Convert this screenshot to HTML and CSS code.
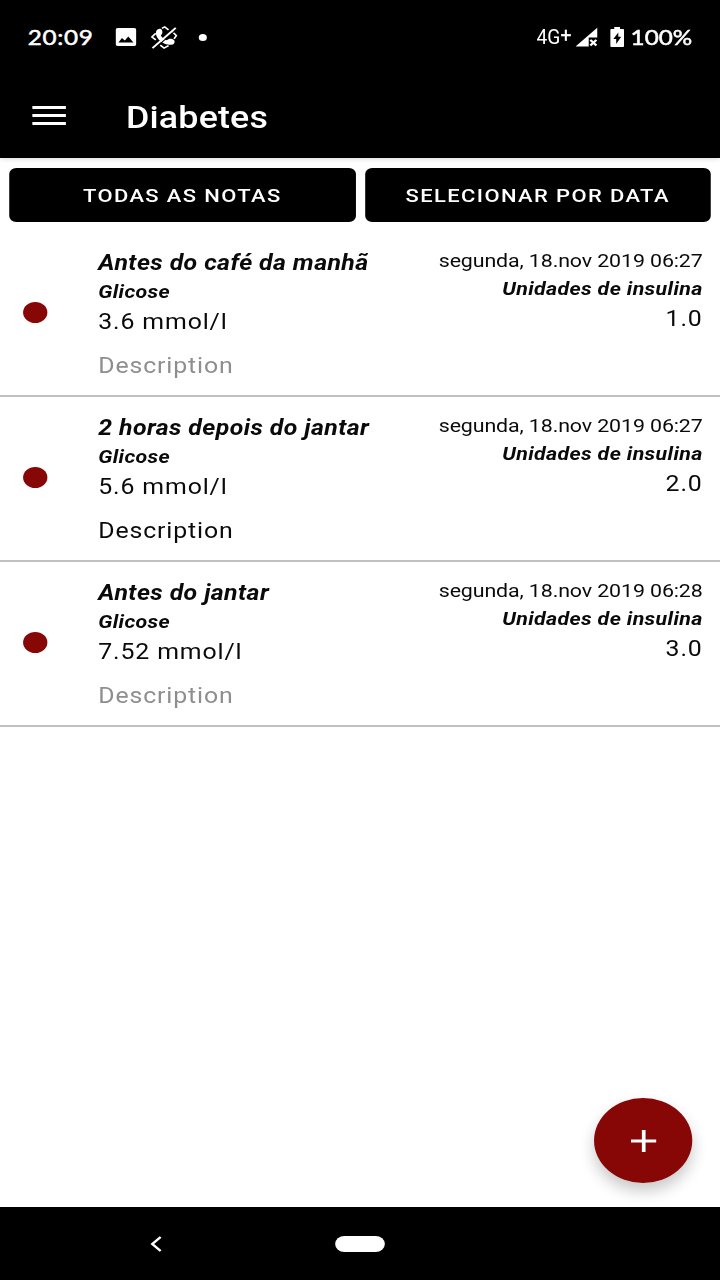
FILE: index.html
```
<!DOCTYPE html>
<html lang="pt">
<head>
    <meta charset="UTF-8">
    <meta name="viewport" content="width=device-width, initial-scale=1.0">
    <title>Diabetes</title>
    <link rel="stylesheet" href="styles.css">
</head>
<body>
    <div class="screen">
        <div class="status-bar">
            <span class="clock">20:09</span>
            <svg class="icon-image" viewBox="0 0 18 18">
                <path fill="#fff" fill-rule="evenodd" d="M2 0h14a2 2 0 0 1 2 2v14a2 2 0 0 1-2 2H2a2 2 0 0 1-2-2V2a2 2 0 0 1 2-2zM5.500 10L2.500 14.500h13l-4.500-6-3 4z"/>
            </svg>
            <svg class="icon-call" viewBox="0 0 24 24">
                <path fill="none" stroke="#fff" stroke-width="1.600" d="M10 2.500l2.500-1.500 3.500 3M19.500 6l3.500 4-2 3.500M4.500 7.500L1 11.500l3.500 3M8.500 20l3.500 3 4-2.500"/>
                <path fill="#fff" d="M5 5C6 3 8 2.300 9.200 3.200c1.300 1.200 1.600 3.500 1 5L9 10c1.200 2.200 3 4 5.300 4.800l2-1.300c1.800-.5 4.200.3 4.900 1.500.7 1.500.2 3.500-1.400 4.300C13.500 21.500 2.500 13.500 5 5z"/>
                <path stroke="#000" stroke-width="1" d="M3.200 23.700l20.500-20.500"/>
                <path stroke="#fff" stroke-width="1.900" d="M1.500 23L22.500 2"/>
            </svg>
            <span class="more-dot"></span>
            <span class="network">4G<span class="plus">+</span></span>
            <svg class="icon-signal" viewBox="0 0 20 20">
                <path fill="#fff" d="M20 0v10.500h-8V20H0z"/>
                <path stroke="#fff" stroke-width="2.200" d="M13.500 13l5.500 6M19 13l-5.500 6"/>
            </svg>
            <svg class="icon-battery" viewBox="0 0 12 20">
                <path fill="#fff" d="M3.500 0h5v2H11a1 1 0 0 1 1 1v16a1 1 0 0 1-1 1H1a1 1 0 0 1-1-1V3a1 1 0 0 1 1-1h2.500z"/>
                <path fill="#000" d="M7 5.500v4.300h2.500L5.200 17v-5H2.700z"/>
            </svg>
            <span class="percent">100%</span>
        </div>

        <header class="app-bar">
            <button class="menu-btn" aria-label="Menu">
                <span></span>
                <span></span>
                <span></span>
            </button>
            <h1>Diabetes</h1>
        </header>

        <main>
            <div class="filters">
                <button class="filter-btn">TODAS AS NOTAS</button>
                <button class="filter-btn">SELECIONAR POR DATA</button>
            </div>

            <ul class="notes">
                <li class="note">
                    <span class="dot"></span>
                    <div class="left">
                        <h2>Antes do café da manhã</h2>
                        <h3>Glicose</h3>
                        <p class="value">3.6 mmol/l</p>
                        <p class="description empty">Description</p>
                    </div>
                    <div class="right">
                        <p class="date">segunda, 18.nov 2019 06:27</p>
                        <h3>Unidades de insulina</h3>
                        <p class="value">1.0</p>
                    </div>
                </li>
                <li class="note">
                    <span class="dot"></span>
                    <div class="left">
                        <h2>2 horas depois do jantar</h2>
                        <h3>Glicose</h3>
                        <p class="value">5.6 mmol/l</p>
                        <p class="description">Description</p>
                    </div>
                    <div class="right">
                        <p class="date">segunda, 18.nov 2019 06:27</p>
                        <h3>Unidades de insulina</h3>
                        <p class="value">2.0</p>
                    </div>
                </li>
                <li class="note">
                    <span class="dot"></span>
                    <div class="left">
                        <h2>Antes do jantar</h2>
                        <h3>Glicose</h3>
                        <p class="value">7.52 mmol/l</p>
                        <p class="description empty">Description</p>
                    </div>
                    <div class="right">
                        <p class="date">segunda, 18.nov 2019 06:28</p>
                        <h3>Unidades de insulina</h3>
                        <p class="value">3.0</p>
                    </div>
                </li>
            </ul>

            <button class="fab" aria-label="Adicionar">
                <svg viewBox="0 0 22 22"><path stroke="#fff" stroke-width="3.200" d="M11 0v22M0 11h22"/></svg>
            </button>
        </main>

        <nav class="nav-bar">
            <svg class="back" viewBox="0 0 10 16"><path fill="none" stroke="#fff" stroke-width="2.300" d="M9 1L1.800 8 9 15"/></svg>
            <span class="home"></span>
        </nav>
    </div>
</body>
</html>
```

FILE: styles.css
```
* {
    box-sizing: border-box;
}

body {
    margin: 0;
    background: #fff;
    font-family: Roboto, 'Liberation Sans', sans-serif;
    overflow: hidden;
}

h1, h2, h3, p, ul {
    margin: 0;
    padding: 0;
}

button {
    border: none;
    padding: 0;
    font-family: inherit;
    cursor: pointer;
}

/* laid out 623px wide, stretched to the full 720px */
.screen {
    width: 623px;
    height: 1280px;
    display: flex;
    flex-direction: column;
    transform: scaleX(1.1557);
    transform-origin: 0 0;
    color: #0a0a0a;
}

/* Status bar */
.status-bar {
    height: 74px;
    padding: 0 24px;
    display: flex;
    align-items: center;
    background: #000;
    color: #fff;
}

.clock, .percent {
    margin-top: -2px;
    font-family: Lato, sans-serif;
    font-size: 21px;
    -webkit-text-stroke: 0.5px #fff;
}

.clock {
    width: 76px;
    letter-spacing: 0.6px;
}

.icon-image {
    width: 18px;
    height: 18px;
}

.icon-call {
    width: 24px;
    height: 23px;
    margin-left: 12px;
}

.more-dot {
    width: 7px;
    height: 7px;
    margin-left: 18px;
    border-radius: 50%;
    background: #fff;
}

.network {
    margin-left: auto;
    font-size: 19.5px;
    transform: scaleX(0.85);
    transform-origin: right;
}

.plus {
    position: relative;
    top: -2px;
    -webkit-text-stroke: 0.4px #fff;
}

.icon-signal {
    width: 19px;
    height: 20px;
    margin-left: 3px;
}

.icon-battery {
    width: 12px;
    height: 20px;
    margin: 0 6px 0 11px;
}

/* App bar */
.app-bar {
    height: 84px;
    padding-left: 28px;
    display: flex;
    align-items: center;
    background: #000;
    color: #fff;
    box-shadow: 0 1px 4px rgba(0,0,0,0.15);
}

.menu-btn {
    width: 29px;
    margin: -1px 52px 0 0;
    display: flex;
    flex-direction: column;
    gap: 5px;
    background: none;
}

.menu-btn span {
    height: 3px;
    background: #fff;
}

h1 {
    margin-top: 3px;
    font-size: 31px;
    font-weight: 500;
    letter-spacing: 0.15px;
}

/* Filters */
main {
    flex: 1;
    position: relative;
}

.filters {
    padding: 10px 8px 0;
    display: flex;
    gap: 8px;
}

.filter-btn {
    flex: 1;
    height: 54px;
    border-radius: 6px;
    background: #000;
    color: #fff;
    font-size: 19px;
    font-weight: 500;
    letter-spacing: 1.2px;
}

/* Notes */
.notes {
    margin-top: 9.5px;
    list-style: none;
}

.note {
    height: 165.2px;
    padding: 15px 15px 0 19.5px;
    display: flex;
    border-bottom: 2px solid #c0c0c0;
}

.dot {
    width: 21px;
    height: 21px;
    margin: 55px 44.5px 0 0;
    border-radius: 50%;
    background: #870606;
}

.left {
    flex: 1;
}

.right {
    text-align: right;
}

h2 {
    font-size: 21.5px;
    font-style: italic;
    font-weight: bold;
    line-height: 31px;
    letter-spacing: 0.35px;
}

h3 {
    font-size: 18.5px;
    font-style: italic;
    font-weight: bold;
    line-height: 28px;
    letter-spacing: 0.3px;
}

.value, .description {
    font-size: 21.5px;
    line-height: 31px;
    letter-spacing: 0.75px;
}

.description {
    margin-top: 13px;
}

.empty {
    color: #8e8e8e;
}

.date {
    font-size: 18.5px;
    line-height: 28px;
    letter-spacing: -0.1px;
}

.right h3 {
    line-height: 29px;
}

.right .value {
    line-height: 30px;
}

.fab {
    position: absolute;
    right: 24px;
    bottom: 24px;
    width: 85px;
    height: 85px;
    display: flex;
    align-items: center;
    justify-content: center;
    border-radius: 50%;
    background: #870606;
    box-shadow: 0 8px 14px rgba(0,0,0,0.22);
}

.fab svg {
    width: 22px;
    height: 22px;
}

/* Navigation bar */
.nav-bar {
    height: 73px;
    display: flex;
    align-items: center;
    background: #000;
}

.back {
    width: 10px;
    height: 16px;
    margin-left: 129.5px;
}

.home {
    width: 43px;
    height: 16px;
    margin-left: 150.5px;
    border-radius: 8px;
    background: #fff;
}
```
